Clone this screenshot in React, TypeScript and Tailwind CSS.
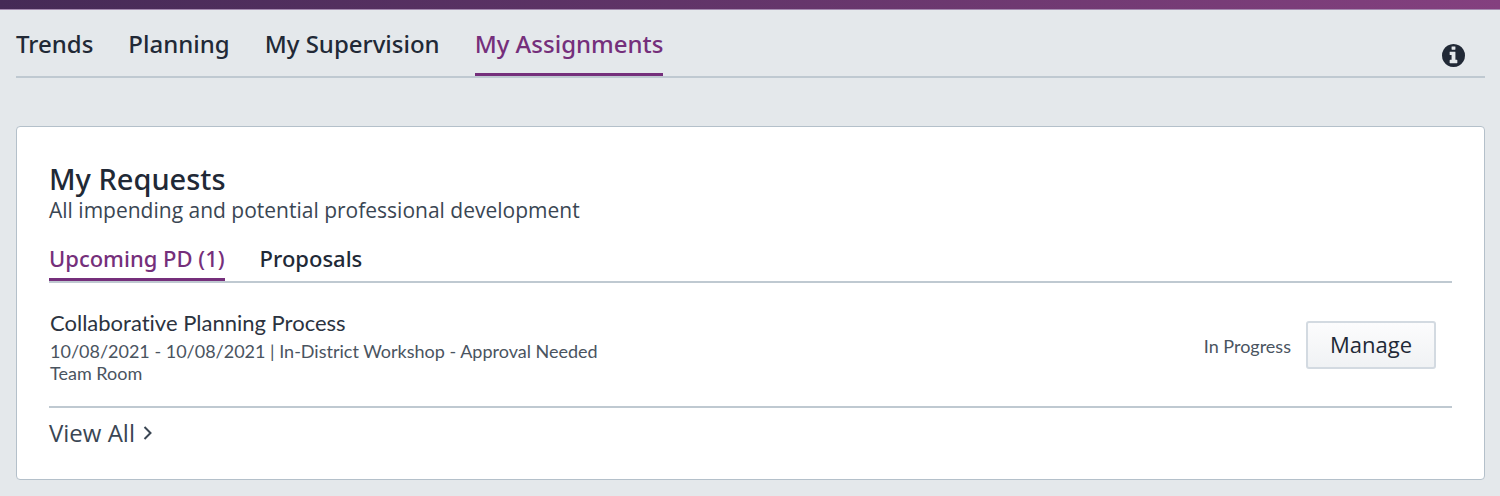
import { useState } from 'react';
import clsx from 'clsx';

const MAIN_TABS = ['Trends', 'Planning', 'My Supervision', 'My Assignments'];

const REQUEST_TABS = ['Upcoming PD (1)', 'Proposals'];

interface TabsProps {
    tabs: string[];
    active: string;
    onSelect: (tab: string) => void;
    tabClassName: string;
}

function Tabs({ tabs, active, onSelect, tabClassName }: TabsProps) {
    return (
        <div role="tablist" className="flex gap-[35px]">
            {tabs.map((tab) => (
                <button
                    key={tab}
                    type="button"
                    role="tab"
                    aria-selected={tab === active}
                    onClick={() => onSelect(tab)}
                    className={clsx(
                        "border-b-3 font-['Noto_Sans',sans-serif] font-medium whitespace-nowrap",
                        tabClassName,
                        tab === active ? 'border-[#752f7b] text-[#752f7b]' : 'border-transparent text-[#212936]'
                    )}
                >
                    {tab}
                </button>
            ))}
        </div>
    );
}

function InfoIcon() {
    return (
        <svg viewBox="128 128 1536 1536" className="size-[23px]" fill="currentColor" aria-hidden="true">
            <path d="M1152 1376v-160q0-14-9-23t-23-9h-96v-512q0-14-9-23t-23-9h-320q-14 0-23 9t-9 23v160q0 14 9 23t23 9h96v320h-96q-14 0-23 9t-9 23v160q0 14 9 23t23 9h448q14 0 23-9t9-23zm-128-896v-160q0-14-9-23t-23-9h-192q-14 0-23 9t-9 23v160q0 14 9 23t23 9h192q14 0 23-9t9-23zm640 416q0 209-103 385.5t-279.5 279.5-385.5 103-385.5-103-279.5-279.5-103-385.5 103-385.5 279.5-279.5 385.5-103 385.5 103 279.5 279.5 103 385.5z" />
        </svg>
    );
}

export default function App() {
    const [mainTab, setMainTab] = useState('My Assignments');
    const [requestTab, setRequestTab] = useState('Upcoming PD (1)');

    return (
        <div className="min-h-screen bg-[#e4e8eb] pb-4 font-['Open_Sans',sans-serif] text-[#212936]">
            <div className="h-[10px] border-b border-[#a58bb0] bg-linear-to-r from-[#452a56] to-[#84407f]" />

            <div className="pr-[15px] pl-4">
                {/* Main navigation */}
                <nav className="flex items-end justify-between border-b-2 border-[#bfc9d1]">
                    <Tabs
                        tabs={MAIN_TABS}
                        active={mainTab}
                        onSelect={setMainTab}
                        tabClassName="pt-[18px] pb-[13px] text-2xl"
                    />
                    <button type="button" aria-label="Information" className="mr-5 mb-[9px]">
                        <InfoIcon />
                    </button>
                </nav>

                {/* Requests card */}
                <section className="mt-12 rounded-[4px] border border-[#b4c0ca] bg-white px-8 pt-8 pb-7">
                    <h1 className="font-['Noto_Sans',sans-serif] text-[29px] leading-10 font-medium">My Requests</h1>
                    <p className="text-[21px] leading-[22px] text-[#3a4653]">
                        All impending and potential professional development
                    </p>

                    <div className="mt-[21px] border-b-2 border-[#bfc9d1]">
                        <Tabs
                            tabs={REQUEST_TABS}
                            active={requestTab}
                            onSelect={setRequestTab}
                            tabClassName="pb-1 text-[22px] leading-8"
                        />
                    </div>

                    <div className="flex items-center justify-between border-b-2 border-[#bfc9d1] pt-[26px] pr-4 pb-[22px] pl-px font-[Lato,sans-serif] [font-variant-ligatures:none]">
                        <div className="text-lg leading-[22px] text-[#4a545f]">
                            <h2 className="mb-[3px] text-[22px] leading-7 text-[#2b3340]">
                                Collaborative Planning Process
                            </h2>
                            <p>10/08/2021 - 10/08/2021 | In-District Workshop - Approval Needed</p>
                            <p>Team Room</p>
                        </div>
                        <div className="flex items-baseline gap-[15px] pb-1">
                            <span className="text-lg text-[#4a545f]">In Progress</span>
                            <button
                                type="button"
                                className="h-12 rounded-[3px] border-2 border-[#d3dae1] bg-linear-to-b from-[#fcfcfd] to-[#f0f2f4] px-[22px] font-['Open_Sans',sans-serif] text-[22px] text-[#212936]"
                            >
                                Manage
                            </button>
                        </div>
                    </div>

                    <a href="#" className="mt-[7px] inline-flex items-center gap-2 text-2xl leading-9 text-[#3a4653]">
                        View All
                        <svg viewBox="0 0 9 14" className="h-[14px] w-[9px]" fill="none" stroke="currentColor" strokeWidth="2">
                            <path d="M1.5 1 L7.5 7 L1.5 13" />
                        </svg>
                    </a>
                </section>
            </div>
        </div>
    );
}
